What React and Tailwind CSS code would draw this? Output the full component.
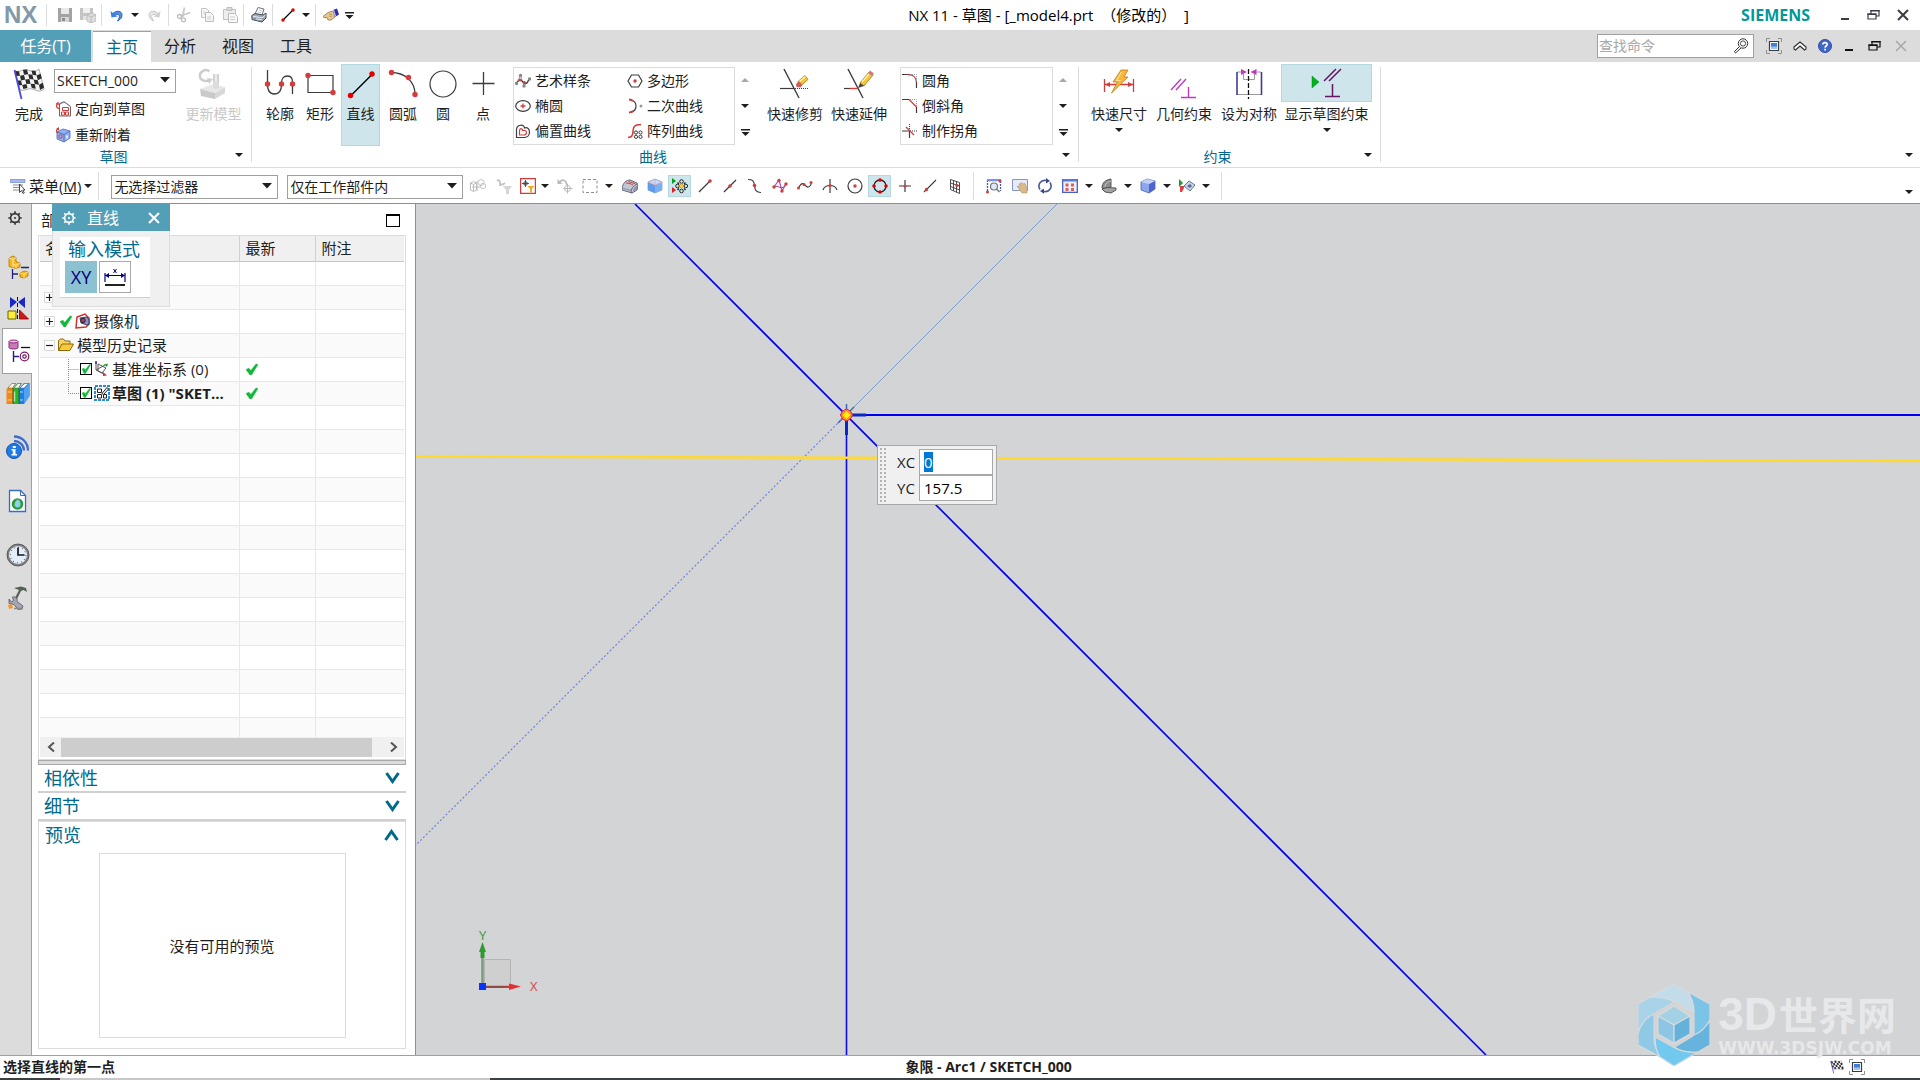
import { useEffect, useRef } from "react";

const INK = "#3c3c3c";
const RED = "#d23c3c";

function Svg({ w = 16, h = w, children, className = "", ...rest }) {
  return (
    <svg width={w} height={h} viewBox={`0 0 ${w} ${h}`} fill="none" aria-hidden="true" className={`shrink-0 ${className}`} {...rest}>
      {children}
    </svg>
  );
}

const Dot = ({ x, y, r = 2, c = RED }) => <circle cx={x} cy={y} r={r} fill={c} />;

function Caret({ color = "#1e1e1e", big = false }) {
  return big ? (
    <Svg w={10} h={6}><path d="M0 0h10L5 5.500z" fill={color} /></Svg>
  ) : (
    <Svg w={8} h={4}><path d="M0 0h8L4 4z" fill={color} /></Svg>
  );
}
const CaretUp = () => <Svg w={8} h={4}><path d="M0 4h8L4 0z" fill="#a8a8a8" /></Svg>;
const CaretBar = () => <Svg w={9} h={7}><path d="M0 0h9v1.500H0zM0.500 3h8L4.500 7z" fill="#1e1e1e" /></Svg>;

/* ---------- quick access icons ---------- */
const Save = () => (
  <Svg><path d="M1 1h14v14H1z" fill="#a3a3a3" /><path d="M4 1h8v6H4z" fill="#e9e9e9" /><path d="M4 10h8v5H4z" fill="#d6d6d6" /><path d="M5 11h3v3H5z" fill="#8d8d8d" /></Svg>
);
const SaveAs = () => (
  <Svg><path d="M0 1h13v12H0z" fill="#c4c4c4" /><path d="M3 1h7v5H3z" fill="#efefef" /><path d="M3 9h5v4H3z" fill="#e2e2e2" /><path d="M7 8l5-2 4 2v6l-5 2-4-2z" fill="#dedede" stroke="#bdbdbd" /><path d="M7 8l4 2 5-2M11 10v6" stroke="#bdbdbd" /></Svg>
);
const Undo = () => (
  <Svg w={14} h={14}><path d="M2.500 6C6 2 12 2.500 12 7c0 2.500-1.500 4.500-4.500 6 1.500-2.500 2.300-4 1.600-5.500-.8-1.700-3-1.500-4.500 0" fill="#4f8fe6" stroke="#2c62b8" strokeWidth="1" /><path d="M0.500 3l1 6.500 6-1z" fill="#3f7edb" /></Svg>
);
const Redo = () => (
  <Svg w={14} h={14}><path d="M11.500 6C8 2 2 2.500 2 7c0 2.500 1.500 4.500 4.500 6C5 10.500 4.200 9 4.900 7.500c.8-1.700 3-1.500 4.500 0" fill="#e6e6e6" stroke="#c6c6c6" /><path d="M13.500 3l-1 6.500-6-1z" fill="#d0d0d0" /></Svg>
);
const Cut = () => (
  <Svg><path d="M8.500 0.500L6.500 10M14.500 5.500L4.500 9" stroke="#c8c8c8" strokeWidth="1.800" /><circle cx="3.500" cy="9.500" r="2" stroke="#bdbdbd" strokeWidth="1.300" /><circle cx="7.500" cy="12.800" r="2" stroke="#bdbdbd" strokeWidth="1.300" /></Svg>
);
const Copy = () => (
  <Svg><path d="M2.500 1.500h5l2 2v7h-7z" fill="#f6f6f6" stroke="#c2c2c2" /><path d="M6.500 5.500h5l3 3v6h-8z" fill="#f6f6f6" stroke="#bcbcbc" /><path d="M8 10h4M8 12h4M4 5h2M4 7h2" stroke="#cfcfcf" /></Svg>
);
const Paste = () => (
  <Svg><path d="M1.500 2.500h12v10h-12z" fill="#ededed" stroke="#c2c2c2" /><path d="M5 0.500h5v3H5z" fill="#dadada" stroke="#bcbcbc" /><path d="M6.500 6.500h6l3 3v6h-9z" fill="#f8f8f8" stroke="#bcbcbc" /><path d="M8 10h5M8 12.500h5" stroke="#cfcfcf" /></Svg>
);
const Print = () => (
  <Svg><path d="M7 .5l6 1.500-2 6-7-1z" fill="#fff" stroke="#6c7480" /><path d="M8 3l3 .7M7 5l3 .7" stroke="#b9bec6" strokeWidth=".8" /><path d="M.8 8.500L4 6.500l8 1.500 3-2v5l-4 4-10-2.500z" fill="#a3a9b2" stroke="#454c56" /><path d="M3 12.500l7 1.500 2.500-2-7-1.200z" fill="#cfe3f7" stroke="#5f6a78" strokeWidth=".6" /><path d="M2 9.200l9 1.800 3.500-3" stroke="#eceff2" /></Svg>
);
const LineSmall = () => (
  <Svg w={14} h={14}><path d="M2 12L12 2" stroke="#000" strokeWidth="1.300" /><Dot x={2} y={12} r={1.700} c="#e00000" /><Dot x={12} y={2} r={1.700} c="#e00000" /></Svg>
);
const Hand = () => (
  <Svg h={14}><path d="M0 8.500l5-4 5-1.500 2 6-4 3H5L4 9.500l-3 .3z" fill="#e9c88f" stroke="#8f7244" strokeWidth=".8" /><path d="M6 6.500l3-.5M6.500 8.500l3-.5" stroke="#a9854c" strokeWidth=".8" /><path d="M10 2l4-1.500 2 6L12 9z" fill="#2b2bb4" /><path d="M10 2l1-.4L13 8l-1 1z" fill="#c8ccf0" /></Svg>
);

/* ---------- window icons ---------- */
const Minimize = ({ c = "#3c3c46" }) => <Svg w={12} h={12}><path d="M2 9h8v2H2z" fill={c} /></Svg>;
const Restore = ({ c = "#3c3c46" }) => (
  <Svg w={13} h={12}><path d="M1 5h8v5H1zM4 5V1.500h8V7H9" stroke={c} strokeWidth="1.200" /><path d="M0.400 4.500h9v1.600h-9zM3.400 1h9.200v1.600H3.400z" fill={c} /></Svg>
);
const Close = ({ c = "#3c3c46", w = 2 }) => <Svg w={12} h={12}><path d="M1 1l10 10M11 1L1 11" stroke={c} strokeWidth={w} /></Svg>;
const FullScreen = () => (
  <Svg><path d="M4 0.500H0.500V4M12 0.500h3.500V4M4 15.500H0.500V12M12 15.500h3.500V12" stroke="#8e8e8e" /><path d="M3.500 3.500h9v9h-9z" fill="#fff" stroke="#3c3c3c" strokeWidth="1.200" /><path d="M5 5h6v6H5z" fill="#3d7fd9" /><path d="M5 8.500h6V11H5z" fill="#9dc4f4" /></Svg>
);
const ChevronsUp = () => (
  <Svg w={14} h={12}><path d="M1 7l6-5 6 5v2l-1.500 1L7 6l-4.500 4L1 9z" fill="#fff" stroke="#2b2b2b" strokeWidth="1.100" /></Svg>
);
const Help = () => (
  <Svg w={14}><circle cx="7" cy="7" r="6.500" fill="#3f66c9" stroke="#2f4fa5" /><path d="M4.800 5.500C5 2.800 9.400 3 9.200 5.500 9 7 7.200 7 7.100 8.600" stroke="#fff" strokeWidth="1.700" /><path d="M6.200 9.800h1.800v1.600H6.200z" fill="#fff" /></Svg>
);
const Key = () => (
  <Svg><circle cx="10" cy="5.500" r="4.700" stroke="#333" /><circle cx="10" cy="5.500" r="2.600" stroke="#333" strokeWidth=".9" /><path d="M6.500 8.500L1.500 13.500l1 1.500L8 10" fill="#fff" stroke="#333" /></Svg>
);

/* ---------- large ribbon icons ---------- */
const Flag = ({ size = 32 }) => (
  <svg width={size} height={size} viewBox="0 0 32 32" fill="none" aria-hidden="true" className="shrink-0">
    <path d="M2 3c5 2 8-3 13-1s7 2 11-1l5 20c-4 4-8 1-12 0s-6 2-12 1z" fill="#f4f4f4" stroke="#777" strokeWidth=".6" />
    <g fill="#2c2c2c">
      <path d="M2 3l4 .3 1 4.500-4 .2zM10 2l4-.6 1.200 4.800-4.200.6zM18.500 2.500l4 .3 1 4.700-4-.7z" />
      <path d="M7 7.700l4-.8 1.200 4.700-4.200.9zM15.200 6.200l4.200.5 1.200 4.700-4.200-.3zM23.600 7.500l4-1.800 1.200 4.500-4 2z" />
      <path d="M4 12.600l4-.2 1.200 4.600-4 .4zM12.200 11.600l4.200-.5 1.200 4.700-4.200.3zM20.600 11.400l4.200.8 1.200 4.600-4.200-.7z" />
      <path d="M9.200 17l4.200-.9 1.100 4-4.100 1zM17.600 15.800l4.200.3 1 4.600-4-.6zM26 16.800l3.800-2 1.200 5-4 2.200z" />
    </g>
    <path d="M1.500 2l7 29" stroke="#4a4ad6" strokeWidth="1.800" />
  </svg>
);
const UpdateModel = () => (
  <Svg w={32}><path d="M11.500 3.500C7 0 1 4 2 9c1 4 7 5 10 3" stroke="#cdcdcd" strokeWidth="2.500" /><path d="M9 10l6 1-4 5z" fill="#cdcdcd" /><path d="M15 6h6v14h-6z" fill="#d2d2d2" /><path d="M17 6h2v14h-2z" fill="#ececec" /><path d="M2 21l13-5 12 3-10 6z" fill="#e8e8e8" /><path d="M2 21l15 4v6L3 28z" fill="#cacaca" /><path d="M17 25l10-6v6l-10 6z" fill="#d8d8d8" /><path d="M15 14h6v6l-3 1-3-1z" fill="#dcdcdc" /></Svg>
);
const Profile = () => (
  <Svg w={32}><path d="M3.500 2v14c0 5 1 10 7 10s7-5 7-10 1-8 6-8 5 4 5 8v10" stroke={INK} strokeWidth="1.300" /><Dot x={3.500} y={16} r={2.700} /><Dot x={17.500} y={16} r={2.700} /><Dot x={28.500} y={16} r={2.700} /></Svg>
);
const Rectangle = () => (
  <Svg w={32}><path d="M4 7.500h25v17H4z" stroke={INK} strokeWidth="1.200" /><Dot x={4} y={7.500} r={2.700} /><Dot x={29} y={24.500} r={2.700} /></Svg>
);
const Line = () => (
  <Svg w={32}><path d="M6 27.500L27 6.500" stroke="#000" strokeWidth="1.500" /><Dot x={5.500} y={27.500} r={2.700} c="#e60000" /><Dot x={27} y={6} r={2.700} c="#e60000" /></Svg>
);
const Arc = () => (
  <Svg w={32}><path d="M4 4.500c14 0 24 9 24 22" stroke={INK} strokeWidth="1.300" /><Dot x={4.500} y={4.500} r={2.700} /><Dot x={21.500} y={9.500} r={2.700} /><Dot x={28} y={26.500} r={2.700} /></Svg>
);
const Circle = () => <Svg w={32}><circle cx="16" cy="16" r="13" stroke={INK} strokeWidth="1.200" /></Svg>;
const Point = () => <Svg w={32}><path d="M16.500 4v23M5.500 15.500h22" stroke={INK} strokeWidth="1.300" /></Svg>;
const Trim = () => (
  <Svg w={32}><path d="M5 1l15 29" stroke={INK} strokeWidth="1.400" /><path d="M1 20.500h14" stroke={INK} strokeWidth="1.200" /><path d="M16 20.500h14" stroke={INK} strokeDasharray="1 1" /><path d="M19 13.500l7-6 3 4-7 6z" fill="#f2c53a" stroke="#a07818" strokeWidth=".8" /><path d="M17 16l3-3 3.500 4-2 2.500-4-.5z" fill="#c9605a" /><path d="M20.500 13.500l6-5" stroke="#fff3a8" strokeWidth="1.500" /></Svg>
);
const Extend = () => (
  <Svg w={32}><path d="M5 1l15 29" stroke={INK} strokeWidth="1.400" /><path d="M1 20.500h6" stroke={INK} strokeWidth="1.200" /><path d="M7 20.500h8" stroke={RED} strokeWidth="1.400" /><path d="M17 15L26 4l4 3-9 11z" fill="#f2c53a" stroke="#a07818" strokeWidth=".8" /><path d="M15 20l2-5 4 3z" fill="#444" /><path d="M25 5l2-2.500 4 3L29 8z" fill="#d27b72" /><path d="M19 14l7-8" stroke="#fff3a8" strokeWidth="1.300" /></Svg>
);
const RapidDim = () => (
  <Svg w={32}><path d="M1.500 11v13M30.500 11v13M2 16.500h28" stroke={RED} strokeWidth="1.300" /><path d="M2 16.500l5-2.500v5zM30 16.500l-5-2.500v5z" fill={RED} /><path d="M18 2h7l-4 7h4L8.500 25l6-11h-4.500z" fill="#f6b73a" stroke="#c4781a" strokeWidth=".8" /><path d="M18.500 4l-5 8.500h4" stroke="#ffe9a0" /></Svg>
);
const GeoConstraint = () => (
  <Svg w={32}><path d="M3 22l10-11M8 22l10-11M20.500 19v11M13 29.500h15" stroke="#c03ac0" strokeWidth="1.400" /></Svg>
);
const Symmetric = () => (
  <Svg w={32}><path d="M4 4h5M23 4h5M4 26.500h24M10.500 6v5.500h11V6" stroke="#9a9a9a" /><path d="M4 4v23M28.500 4v23" stroke="#3c3c96" strokeWidth="1.600" /><path d="M15.500 1v30" stroke="#111" strokeWidth="1.300" strokeDasharray="5 2" /><path d="M8 1l6 3-6 3zM23.500 1l-6 3 6 3z" fill="#c03ac0" /></Svg>
);
const ShowConstraints = () => (
  <Svg w={32}><path d="M1 9l7 6-7 6z" fill="#00b41e" stroke="#008a14" strokeWidth=".5" /><path d="M13 14L25 2M18 14L30 2M21.500 17v12M14 29.500h15" stroke="#6a1464" strokeWidth="1.500" /></Svg>
);

/* ---------- small ribbon icons ---------- */
const Orient = () => (
  <Svg><path d="M4.500 2.500L9 .8l6.500 4.700v9.500h-11z" fill="#fff" stroke="#666" /><path d="M5 3l4.500-2 5.500 4" stroke="#7d7dd0" /><path d="M7.500 6.500h6v3h-6zM6.500 11h3v3h-3zM10.500 11h3v3h-3z" stroke={RED} /><path d="M4 7.500C1 7 1 4 2.500 3" stroke={RED} strokeWidth="1.300" /><path d="M0.500 3l3-2.500.5 3.500z" fill={RED} /></Svg>
);
const Reattach = () => (
  <Svg><path d="M2 5l6-3 7 2v7l-6 4-7-3z" fill="#8fb2f0" stroke="#4a62b8" strokeWidth=".8" /><path d="M2 5l7 2.500L15 4M9 7.500V15" stroke="#4a62b8" strokeWidth=".8" /><path d="M4 8h3v3H4z" stroke="#d24a6a" /><path d="M11 8.500h2v3h-2z" fill="#dfe8fc" /><path d="M3 6C1 5 1 3 3 2" stroke={RED} strokeWidth="1.300" /><path d="M1 2l3-2v3.500z" fill={RED} /></Svg>
);
const Spline = () => (
  <Svg><path d="M1.500 10L5.500 2.500 9 13l5.500-7" stroke="#9a9a9a" /><path d="M1 11c4-6 5-4 7-2s4 3 6-3" stroke={INK} strokeWidth="1.200" /><Dot x={1.500} y={10.500} c="#888" r={1.700} /><Dot x={5.500} y={2.500} c="#888" r={1.700} /><Dot x={9} y={13} c="#888" r={1.700} /><Dot x={14.500} y={6} c="#888" r={1.700} /><Dot x={5} y={7} r={1.500} /><Dot x={9.500} y={9.500} r={1.500} /></Svg>
);
const Ellipse = () => <Svg><ellipse cx="8" cy="8" rx="7.300" ry="5.300" stroke={INK} strokeWidth="1.200" /><path d="M8 5.500v5M5.500 8h5" stroke={RED} strokeWidth="1.300" /></Svg>;
const OffsetCurve = () => <Svg><path d="M1.500 14.500V7c0-6 8-6 8-2 3-1 5 1 5 4 0 3-2 5.500-5 5.500z" stroke={INK} strokeWidth="1.200" /><path d="M4.500 12V8c0-3 3-3 3-.5 2-.5 4 0 4 2S10 12 8.500 12z" stroke={RED} strokeWidth="1.200" /></Svg>;
const Polygon = () => <Svg><path d="M4.500 2h7l3.500 6-3.500 6h-7L1 8z" stroke={INK} strokeWidth="1.200" /><Dot x={8} y={8} r={1.700} /></Svg>;
const Conic = () => <Svg><path d="M3 2c8 1 8 11 0 12.500" stroke={INK} strokeWidth="1.200" /><path d="M2 1.500c2 0 3 .5 4 1.500M2 14.500c2 0 3-.5 4-1.500" stroke={RED} strokeWidth="2" /><Dot x={14} y={8} c="#9a9a9a" r={1.500} /></Svg>;
const PatternCurve = () => (
  <Svg><path d="M1 14.500c4 0 5-2 5-6s1-7 8-7" stroke={RED} strokeWidth="1.600" /><circle cx="9" cy="9.500" r="1.600" stroke={INK} /><circle cx="13.500" cy="9.500" r="1.600" stroke={INK} /><circle cx="9" cy="13.800" r="1.600" stroke={INK} /><circle cx="13.500" cy="13.800" r="1.600" stroke={INK} /></Svg>
);
const Fillet = () => <Svg><path d="M0 1.500h6M14.500 9v6" stroke={INK} strokeWidth="1.200" /><path d="M6 1.500c5 0 8.500 3 8.500 8" stroke={RED} strokeWidth="1.300" /><path d="M8 1.500h6.500V8" stroke="#999" strokeDasharray="1 1" /></Svg>;
const Chamfer = () => <Svg><path d="M0 1.500h7M14.500 9v6" stroke={INK} strokeWidth="1.200" /><path d="M7 1.500l7.500 7.500" stroke={RED} strokeWidth="1.300" /><path d="M8 1.500h6.500V8" stroke="#999" strokeDasharray="1 1" /></Svg>;
const Corner = () => <Svg><path d="M0 8h8M7.500 8v7" stroke={INK} strokeWidth="1.200" /><path d="M7.500 1v7M8 8h7" stroke={INK} strokeDasharray="1 1" /><path d="M4 4l8 8" stroke={RED} strokeWidth="1.300" /></Svg>;

/* ---------- selection bar icons ---------- */
const MenuIcon = () => (
  <Svg><path d="M0 1.500h15v3H0z" fill="#a5b8ee" stroke="#6f85cf" strokeWidth=".7" /><path d="M3 7h10M3 9.500h7M3 12h8" stroke="#8b8b8b" strokeWidth="1.200" /><path d="M9.500 6v8.500l2-2 1.500 3 1.300-.7-1.500-2.800H15z" fill="#fff" stroke="#333" strokeWidth=".9" /></Svg>
);
const AsmGrey = () => <Svg><path d="M0.500 5l3-1.500L6.500 5v7l-3 1.500-3-1.500zM0.500 5l3 1.500 3-1.500M3.500 6.500v7M2 9h8M7 3v10" stroke="#bdbdbd" /><circle cx="11" cy="4.500" r="3" stroke="#c6c6c6" /><circle cx="13" cy="8" r="2.700" stroke="#c6c6c6" /></Svg>;
const FilterGrey = () => <Svg><path d="M1 3c2-2 3 0 3 2s3 2 5 0M4 5v3" stroke="#c4c4c4" strokeWidth="1.800" /><path d="M7 8h9l-3 4v4h-3v-4z" fill="#d6d6d6" /></Svg>;
const SelScope = () => <Svg><path d="M.6.6h14.800v14.800H.6z" fill="#fff" stroke={RED} strokeWidth="1.200" /><circle cx="5.500" cy="5.500" r="1.800" stroke="#444" /><path d="M5.500 2v7M2 5.500h7" stroke="#444" strokeWidth=".9" /><path d="M7.500 8h7L12 11v3.500h-2V11z" fill="#eab12e" /></Svg>;
const SnapGrey = () => <Svg><path d="M2 5c3-5 7-3 8 2" stroke="#bababa" strokeWidth="1.600" /><path d="M.5 1v5h5z" fill="#bababa" /><circle cx="10.500" cy="10.500" r="3" stroke="#bababa" /><path d="M10.500 6v9.500M6 10.500h9.500" stroke="#bababa" /></Svg>;
const Marquee = () => <Svg><path d="M1 1.500h14v13H1z" stroke="#8c8c8c" strokeWidth="1" strokeDasharray="3 2" /></Svg>;
const FaceCube = () => <Svg><path d="M0 10c1-5 4-8 8-8l7 3c1 1 1 5 0 7l-5 3-10-3z" fill="#c3c6d4" stroke="#55586a" strokeWidth=".9" /><path d="M9 15c0-4 2-7 6-9" stroke="#55586a" strokeWidth=".9" /><path d="M0 10l9 2.500" stroke="#7b7e90" strokeWidth=".8" /><path d="M4 5c3 0 5 1 7 2M6.500 3.500l6.500 2.200" stroke={RED} /><path d="M11 14c0-3 1.500-5 4-6.500v4.500z" fill="#8f93a8" /></Svg>;
const BlueCube = () => <Svg><path d="M1 4l7-3 7 3v8l-7 3-7-3z" fill="#c5dcf8" stroke="#6f93c4" strokeWidth=".7" /><path d="M1 4l7 3v8l-7-3z" fill="#5f9be8" /><path d="M8 7l7-3v8l-7 3z" fill="#7db0f0" /><path d="M1 4l7 3 7-3M8 7V1" stroke="#e8a5b5" strokeWidth=".8" /></Svg>;
const SnapAll = () => (
  <Svg><path d="M0 0l4 3-4 3z" fill="#00a01e" /><path d="M0 9l4 3-4 3z" fill="#e02020" /><circle cx="9.500" cy="3.500" r="1.800" stroke="#222" /><circle cx="9.500" cy="13" r="1.800" stroke="#222" /><circle cx="5.500" cy="8" r="1.800" stroke="#222" /><circle cx="13.800" cy="8" r="1.800" stroke="#222" /><path d="M9.500 5.500L12 8l-2.500 2.500L7 8z" fill="#ffd21e" stroke="#a08010" strokeWidth=".6" /><path d="M5.500 4.500l1.500 1.500M13.500 4.500L12 6M5.500 12l1.500-1.500M13.500 12L12 10.500" stroke="#222" strokeWidth="1.300" /></Svg>
);
const EndPoint = () => <Svg><path d="M2 14L13 3" stroke={INK} strokeWidth="1.200" /><Dot x={13} y={3} r={1.800} /></Svg>;
const MidPoint = () => <Svg><path d="M2 14L14 2" stroke={INK} strokeWidth="1.200" /><Dot x={8} y={8} r={1.800} /></Svg>;
const CtrlPoint = () => <Svg><path d="M1 1.500c5 0 6 1.500 6.500 6S9 14.500 14 14.500" stroke={INK} strokeWidth="1.200" /><Dot x={7.500} y={7.500} r={1.800} /></Svg>;
const Poles = () => <Svg><path d="M2 9L7 2l3 11 4-7" stroke="#b048c8" strokeWidth="1.200" /><path d="M2 9c4-3 8 5 12-3" stroke="#8a4a6a" /><Dot x={2} y={9} r={1.700} /><Dot x={7} y={2.500} r={1.700} /><Dot x={10} y={13} r={1.700} /><Dot x={14} y={6} r={1.700} /></Svg>;
const Knots = () => <Svg><path d="M1.500 10c4-8 6-3 8-1.500S14 8 14.500 4.500" stroke={INK} strokeWidth="1.200" /><Dot x={1.500} y={10} r={1.500} /><Dot x={7} y={6.500} r={1.500} /><Dot x={14} y={4.500} r={1.500} /></Svg>;
const Intersect = () => <Svg><path d="M8 1v14" stroke={INK} strokeWidth="1.200" /><path d="M1 12c2-6 12-6 14 0" stroke={INK} strokeWidth="1.200" /><Dot x={8} y={7.500} r={1.600} /></Svg>;
const ArcCenter = () => <Svg><circle cx="8" cy="8" r="7" stroke={INK} strokeWidth="1.200" /><Dot x={8} y={8} r={1.700} /></Svg>;
const Quadrant = () => <Svg><circle cx="8" cy="8" r="6" stroke="#222" strokeWidth="1.300" /><Dot x={8} y={2} r={1.800} c="#e00000" /><Dot x={8} y={14} r={1.800} c="#e00000" /><Dot x={2} y={8} r={1.800} c="#e00000" /><Dot x={14} y={8} r={1.800} c="#e00000" /></Svg>;
const Existing = () => <Svg><path d="M8 2v12M2 8h12" stroke={INK} strokeWidth="1.200" /><Dot x={8} y={8} r={1.500} /></Svg>;
const OnCurve = () => <Svg><path d="M2 14L14 2" stroke={INK} strokeWidth="1.100" /><Dot x={4.500} y={11.500} r={1.700} /></Svg>;
const OnFace = () => <Svg><path d="M3.500 1.500l9 3v11l-9-4zM6.500 2.500v10.300M9.500 3.500v10.700M3.500 5l9 3M3.500 8.500l9 3.500" stroke="#3a3a3a" strokeWidth=".9" /><Dot x={10} y={7.500} r={1.600} /></Svg>;
const FitWindow = () => <Svg><path d="M1.500 13V2.500h13V13" stroke="#3d55c9" strokeWidth="1.300" strokeDasharray="2 1" /><path d="M1 1h14v2H1z" fill="#7d90e8" /><circle cx="8" cy="8.500" r="3.500" fill="#dfe8f6" stroke="#777" strokeWidth="1.200" /><path d="M10.500 11l3 3" stroke="#777" strokeWidth="1.500" /><Dot x={1.500} y={14} r={1.500} /><Dot x={14} y={3} r={1.500} /></Svg>;
const PanHand = () => <Svg><path d="M.5 1.500h15v11H.5z" fill="#e6ebfb" stroke="#8494cc" /><path d="M5 8l2 1 .5-3.500L9 6l1-1.500L11.500 6l1.500-.5 1.500 3.500.5 6H10z" fill="#d9b98a" stroke="#b3935f" strokeWidth=".6" /></Svg>;
const Rotate = () => <Svg><path d="M3 11.500C0 6.500 4 1.500 9 2.500M13 4.500c3 5-1 10-6 9" stroke="#4a5a96" strokeWidth="1.600" /><path d="M9 0l4 3-4 2.500zM7 10.500L3 13l4 2.800z" fill="#3b4a86" /></Svg>;
const Layout = () => <Svg><path d="M.7 1.700h14.600v12.600H.7z" fill="#eef2ff" stroke="#4460cc" strokeWidth="1.300" /><path d="M1 1h14v2.500H1z" fill="#5a76e0" /><path d="M3.500 5.500h3v3h-3zM9 5.500h3v3H9zM3.500 10h3v3h-3zM9 10h3v3H9z" fill="#e25a4a" /></Svg>;
const DarkShape = () => <Svg><path d="M1 10C1 5 4 2 10 1v8L5 12z" fill="#8c8c8c" stroke="#4a4a4a" strokeWidth=".9" /><path d="M4 9c0-3 2-5 6-6" stroke="#c9c9c9" /><path d="M1 11l5-1.500 9 .5v2l-5 3-6-1z" fill="#a3a3a3" stroke="#4a4a4a" strokeWidth=".9" /></Svg>;
const ShadedCube = () => <Svg><path d="M1 4l6-3 8 2v8l-6 4-8-3z" fill="#8fa6ee" stroke="#4a5fb8" strokeWidth=".8" /><path d="M9 6l6-3v8l-6 4z" fill="#4e66c9" /><path d="M1 4l6-3 8 2-6 3z" fill="#c3d0fa" /></Svg>;
const ShowHide = () => <Svg><path d="M0 1l4 4-4 4z" fill="#16a030" /><path d="M1 8h4v2l-2 4H1z" fill="#e04040" /><path d="M5 8l5-5 6 4-5 6z" fill="#c7d4ee" stroke="#5a6a8a" strokeWidth=".9" /><path d="M8 8l3-2 2 2-2 2z" fill="#5a6a8a" /></Svg>;

/* ---------- resource bar icons ---------- */
const Gear = ({ c = "#333", size = 14 }) => (
  <svg width={size} height={size} viewBox="0 0 14 14" fill="none" aria-hidden="true" className="shrink-0">
    <circle cx="7" cy="7" r="4.400" stroke={c} strokeWidth="1.600" />
    <circle cx="7" cy="7" r="1" fill={c} />
    <path d="M7 .3v2M7 11.700v2M.3 7h2M11.700 7h2M2.300 2.300l1.300 1.300M10.400 10.400l1.300 1.300M2.300 11.700l1.300-1.300M10.400 3.600l1.300-1.300" stroke={c} strokeWidth="1.600" />
  </svg>
);
const Assembly = () => (
  <Svg w={24}><path d="M2 3l4-2 3 1.500v4l4 1.500v4l-4 1.500-7-2z" fill="#f9b51c" stroke="#b57700" strokeWidth=".8" /><path d="M2 3l4 1.500 3-2M6 4.500v8M6 9l3 1.500 4-2.500M9 10.500v3" stroke="#fff0b0" strokeWidth=".9" /><path d="M14 12.500h8M5.500 14v10M6 19h5" stroke="#22227a" strokeWidth="1.300" /><path d="M13 18l4-2 4 1v4l-4 2-4-1z" fill="#f9b51c" stroke="#b57700" strokeWidth=".8" /><path d="M13 18l4 1 4-2M17 19v4" stroke="#fff0b0" strokeWidth=".8" /></Svg>
);
const Constraint = () => (
  <Svg w={24}><path d="M3 1l7 5-7 6zM18 1l-7 5 7 6z" fill="#1a28c8" /><path d="M10.500 1v22" stroke="#111" strokeDasharray="4 2" /><path d="M1 15h8v8H1z" fill="#ffee3a" stroke="#6a6000" /><path d="M12.500 14v9h9z" fill="#d81414" stroke="#7a0808" strokeWidth=".8" /></Svg>
);
const PartNav = () => (
  <Svg w={24}><path d="M1 2.500v6c0 2 9 2 9 0v-6" fill="#c77bb8" stroke="#8a2a78" /><ellipse cx="5.500" cy="2.500" rx="4.500" ry="1.500" fill="#ebc1e2" stroke="#8a2a78" /><path d="M13 8.500h9" stroke="#111" strokeWidth="1.300" /><path d="M5.500 12v11M6 17.500h5" stroke="#22227a" strokeWidth="1.400" /><circle cx="16.500" cy="17.500" r="4.300" stroke="#7a1a68" strokeWidth="1.200" /><circle cx="16.500" cy="17.500" r="1.700" stroke="#7a1a68" strokeWidth="1.200" /></Svg>
);
const Books = () => (
  <Svg w={24}><path d="M.5 7L6 1h4.500L7 6.500V22H.5z" fill="#ef8a12" /><path d="M7 6.500L11.500 1H16l-3 5.500V22H7z" fill="#25b82c" /><path d="M13 6.500L18 1h5.500v13L18 22h-5z" fill="#1f7fe0" /><path d="M18 7l5.500-6v13L18 22z" fill="#4fa2f0" /><path d="M2 6l4-4.500h3.500L6.500 6zM8 6l4-4.500h3L12.500 6zM14 6l4.500-4.500h4L18 6z" fill="#fff" stroke="#556" strokeWidth=".5" /><path d="M1.500 10H6M1.500 18H6" stroke="#ffd08a" /><path d="M8.500 9.500v10" stroke="#a5f0a8" strokeWidth="1.500" /><path d="M14 10h3M14 18h3" stroke="#a8d4ff" /><path d="M7 6v16M13 6v16" stroke="#334" strokeWidth=".7" /></Svg>
);
const InfoFeed = () => (
  <Svg w={24}><path d="M8 1.500c8 0 14 6 14 14M8 6c5 0 10 4 10 9.500" stroke="#3c6cc8" strokeWidth="2.300" /><circle cx="8" cy="16" r="7.500" fill="#1d7bea" stroke="#1a4fa8" /><path d="M6.800 11h3v2h-3zM5.500 14h4v5h1.500v1.500H5.500V19h1.300v-3.500H5.500z" fill="#fff" /></Svg>
);
const WebPage = () => (
  <Svg w={20} h={24}><path d="M1.500 1.500h11l5 5v16h-16z" fill="#fff" stroke="#3a6cc0" strokeWidth="1.300" /><path d="M12.500 1.500v5h5" stroke="#3a6cc0" /><circle cx="9.500" cy="15" r="5.800" fill="#2e9a36" /><path d="M9.500 10.500c3 1 4 5 2 7.500-2 1-5 0-5-2s1-4 3-5.500z" fill="#8fd0ee" /></Svg>
);
const Clock = () => (
  <Svg w={24}><circle cx="12" cy="12" r="10" fill="#e3edf8" stroke="#7f7f84" strokeWidth="2" /><circle cx="12" cy="12" r="11" stroke="#4c4c50" strokeWidth=".8" /><circle cx="12" cy="12" r="7.800" stroke="#333" strokeWidth="1" strokeDasharray="1 3.080" /><path d="M12 4.500V12h6.500" stroke="#14141e" strokeWidth="1.700" /></Svg>
);
const Tools = () => (
  <Svg w={24}><path d="M8 2l7-1.500 5 1.500 1 4-3.500-2L15 5l-4 8-2-1 4-8z" fill="#566056" /><path d="M3 13l2.500 3 2-1.500L6.500 11c3-1 5.500 2 4.500 4.500l6 4.500-1 3-4 .5-4-5-5-1z" fill="#a5a5b4" stroke="#55555f" strokeWidth=".8" /><path d="M2 19l4-1 1 4-4 1z" fill="#f79a1e" /><path d="M8 22.500h9" stroke="#8a8a8a" strokeWidth="1.500" /></Svg>
);

/* ---------- tree icons ---------- */
const Tick = () => <Svg w={12} h={12}><path d="M0 6.500l3-1.300 1.800 2.300L10 1l2 .5L5.500 12H4z" fill="#12b83a" stroke="#12b83a" strokeWidth=".5" /></Svg>;
const Camera = () => (
  <Svg><path d="M2 4l8-3 4 4v6l-3 3-10 1z" fill="#fff" stroke="#d03030" strokeWidth="1.500" /><path d="M5 5l7-1 2 3v4l-2 1-6-2z" fill="#7f98d4" stroke="#223" strokeWidth=".8" /><circle cx="8" cy="7.500" r="2.300" fill="#b43a4a" stroke="#223" /></Svg>
);
const Folder = () => (
  <Svg h={14}><path d="M.5 12.500v-10l2-1.500h3l1.500 2h5v3" fill="#f7d464" stroke="#8a6a10" /><path d="M.5 12.500L4 6h11.500l-3.500 6.500z" fill="#fbc93a" stroke="#8a6a10" /></Svg>
);
const Datum = () => (
  <Svg><path d="M2 1v8l8 4M2 9l9-5M4 3l8 4-4 5-4-2z" stroke="#555" /><path d="M2 0v3" stroke="#2a2ad0" strokeWidth="1.500" /><path d="M10 3.500l4-1-1 3.500z" fill="#18a030" /><path d="M9 11l4 3.500-4 .5z" fill="#d03030" /></Svg>
);
const SketchIcon = () => (
  <Svg><path d="M1 1h14v14H1z" fill="#fff" stroke="#2a8ad8" strokeWidth="2" strokeDasharray="3 1" /><path d="M3.500 4h4v3.500h-4zM3.500 9.500h4v3.500h-4zM9.500 9.500h3v3.500h-3z" fill="#fff" stroke="#222" /><path d="M8 8.500l5-6 1.500 1.500-5 5.500z" fill="#fff" stroke="#222" /></Svg>
);

/* ---------- building blocks ---------- */
function IconButton({ label, className = "w-[25px]", children }) {
  return (
    <button type="button" aria-label={label} title={label} className={`flex shrink-0 items-center justify-center ${className}`}>
      {children}
    </button>
  );
}
const QuickDivider = () => <span className="ml-0.5 mr-[3px] h-[22px] w-px shrink-0 bg-[#dcdcdc]" />;
const BarDivider = ({ className = "" }) => <span className={`h-7 w-px shrink-0 bg-[#dcdcdc] ${className}`} />;
const GroupDivider = () => <span className="my-[5px] w-px shrink-0 bg-[#dcdcdc]" />;

function BigButton({ label, icon, className, disabled, active, arrow, iconActive }) {
  return (
    <button
      type="button"
      disabled={disabled}
      aria-pressed={active || iconActive || undefined}
      className={`mt-0.5 flex h-[82px] shrink-0 flex-col items-center border text-sm leading-5 whitespace-nowrap ${active ? "border-[#b4d8e0] bg-[#cde5eb]" : "border-transparent"} ${disabled ? "text-[#c8c8c8]" : ""} ${className}`}
    >
      <span className={`flex h-[38px] items-center justify-center ${iconActive ? "-mx-px -mt-px w-[91px] border border-[#b4d8e0] bg-[#cde5eb]" : ""}`}>{icon}</span>
      <span className={iconActive ? "mt-0.5" : "mt-px"}>{label}</span>
      {arrow && <span className="mt-1"><Caret /></span>}
    </button>
  );
}

function SmallButton({ label, icon }) {
  return (
    <button type="button" className="flex items-center gap-1 pl-px text-sm leading-5 whitespace-nowrap">
      {icon}
      {label}
    </button>
  );
}

function Group({ title, children, className = "" }) {
  return (
    <section aria-label={title} className="flex shrink-0 flex-col">
      <div className={`flex h-[85px] ${className}`}>{children}</div>
      <div className="flex h-5 items-center">
        <span className="flex-1 text-center text-sm leading-5 text-[#00698c]">{title}</span>
        <IconButton label={`${title} 选项`} className="w-6 pb-1"><Caret /></IconButton>
      </div>
    </section>
  );
}

function GalleryScroll() {
  return (
    <div className="mt-[5px] grid h-[78px] w-5 grid-rows-3">
      <IconButton label="向上" className="w-5"><CaretUp /></IconButton>
      <IconButton label="向下" className="w-5"><Caret /></IconButton>
      <IconButton label="更多" className="w-5"><CaretBar /></IconButton>
    </div>
  );
}

function Combo({ label, value, className = "" }) {
  return (
    <div className={`relative h-6 shrink-0 ${className}`}>
      <select aria-label={label} defaultValue={value} className="h-full w-full appearance-none border border-[#a0a0a0] bg-white pl-0.5 text-sm leading-5 text-[#1e1e1e] outline-none">
        <option>{value}</option>
      </select>
      <span className="pointer-events-none absolute inset-y-0 right-1.5 flex items-center"><Caret big /></span>
    </div>
  );
}

/* ---------- page sections ---------- */
function TitleBar() {
  return (
    <header className="flex h-[30px] shrink-0 items-center bg-white">
      <div className="flex w-[47.3%] items-center self-stretch">
        <span className="w-[46px] shrink-0 pl-1 font-['Liberation_Sans',sans-serif] text-2xl leading-7 font-bold text-[#8399aa]">NX</span>
        <span className="mr-1.5 h-[22px] w-px shrink-0 bg-[#dcdcdc]" />
        <IconButton label="保存" className="w-[23px]"><Save /></IconButton>
        <IconButton label="全部保存" className="w-[23px]"><SaveAs /></IconButton>
        <QuickDivider />
        <IconButton label="撤消" className="w-[23px]"><Undo /></IconButton>
        <IconButton label="撤消列表" className="w-3.5"><Caret /></IconButton>
        <IconButton label="重做" className="w-6"><Redo /></IconButton>
        <QuickDivider />
        <IconButton label="剪切" className="w-[23px]"><Cut /></IconButton>
        <IconButton label="复制" className="w-[23px]"><Copy /></IconButton>
        <IconButton label="粘贴" className="w-[23px]"><Paste /></IconButton>
        <QuickDivider />
        <IconButton label="打印" className="w-[23px]"><Print /></IconButton>
        <QuickDivider />
        <IconButton label="直线" className="w-[23px]"><LineSmall /></IconButton>
        <IconButton label="直线列表" className="w-3.5"><Caret /></IconButton>
        <QuickDivider />
        <IconButton label="触控模式" className="w-[23px]"><Hand /></IconButton>
        <IconButton label="自定义" className="w-3.5"><CaretBar /></IconButton>
      </div>
      <h1 className="text-[15px] leading-6 whitespace-pre text-black">NX 11 - 草图 - [_model4.prt  （修改的）  ]</h1>
      <div className="flex flex-1 items-center justify-end">
        <span className="mr-5 text-base leading-5 font-bold text-[#009999]">SIEMENS</span>
        <IconButton label="最小化" className="w-[29px]"><Minimize /></IconButton>
        <IconButton label="还原" className="w-[29px]"><Restore /></IconButton>
        <IconButton label="关闭" className="mr-[3px] w-[29px]"><Close /></IconButton>
      </div>
    </header>
  );
}

function TabBar() {
  return (
    <nav className="flex h-8 shrink-0 bg-[#dcdcdc] text-base leading-6">
      <button type="button" className="mr-0.5 w-[91px] bg-[#539fb7] text-white">任务(T)</button>
      <button type="button" aria-current="page" className="mt-px w-[58px] border-t border-[#a0a0a0] bg-white text-[#00698c]">主页</button>
      <button type="button" className="w-[58px]">分析</button>
      <button type="button" className="w-[58px]">视图</button>
      <button type="button" className="w-[58px]">工具</button>
      <div className="flex flex-1 items-center justify-end">
        <div className="mr-[7px] flex h-6 w-[157px] items-center border border-[#a0a0a0] bg-white pr-1">
          <input aria-label="查找命令" placeholder="查找命令" className="min-w-0 flex-1 pl-px text-sm leading-5 outline-none placeholder:text-[#a8a8a8]" />
          <Key />
        </div>
        <IconButton label="全屏" className="w-[26px]"><FullScreen /></IconButton>
        <IconButton label="最小化功能区" className="w-[26px]"><ChevronsUp /></IconButton>
        <IconButton label="帮助" className="w-6"><Help /></IconButton>
        <IconButton label="最小化窗口" className="w-6"><Minimize c="#111" /></IconButton>
        <IconButton label="还原窗口" className="w-[27px]"><Restore c="#111" /></IconButton>
        <IconButton label="关闭窗口" className="mr-1.5 w-[26px]"><Close c="#a8a8a8" w={1.500} /></IconButton>
      </div>
    </nav>
  );
}

function Ribbon() {
  return (
    <div className="flex shrink-0 border-b border-[#dcdcdc] bg-white">
      <Group title="草图" className="pl-2">
        <BigButton label="完成" icon={<Flag />} className="w-[42px]" />
        <div className="ml-1 flex w-[122px] flex-col pt-1.5">
          <Combo label="草图名" value="SKETCH_000" />
          <div className="mt-1 grid grid-rows-[26px_25px]">
            <SmallButton label="定向到草图" icon={<Orient />} />
            <SmallButton label="重新附着" icon={<Reattach />} />
          </div>
        </div>
        <BigButton label="更新模型" icon={<UpdateModel />} disabled className="w-[75px]" />
      </Group>
      <GroupDivider />
      <Group title="曲线" className="pr-[5px] pl-2">
        <BigButton label="轮廓" icon={<Profile />} className="w-10" />
        <BigButton label="矩形" icon={<Rectangle />} className="w-10" />
        <BigButton label="直线" icon={<Line />} active className="ml-px w-[39px]" />
        <BigButton label="圆弧" icon={<Arc />} className="w-[46px]" />
        <BigButton label="圆" icon={<Circle />} className="w-[34px]" />
        <BigButton label="点" icon={<Point />} className="w-[46px]" />
        <div className="mt-[5px] ml-[7px] grid h-[78px] w-[222px] grid-cols-[112px_1fr] grid-rows-3 border border-[#dcdcdc]">
          <SmallButton label="艺术样条" icon={<Spline />} />
          <SmallButton label="多边形" icon={<Polygon />} />
          <SmallButton label="椭圆" icon={<Ellipse />} />
          <SmallButton label="二次曲线" icon={<Conic />} />
          <SmallButton label="偏置曲线" icon={<OffsetCurve />} />
          <SmallButton label="阵列曲线" icon={<PatternCurve />} />
        </div>
        <GalleryScroll />
        <BigButton label="快速修剪" icon={<Trim />} className="ml-2 w-16" />
        <BigButton label="快速延伸" icon={<Extend />} className="w-16" />
        <div className="mt-[5px] ml-[9px] grid h-[78px] w-[153px] grid-rows-3 border border-[#dcdcdc]">
          <SmallButton label="圆角" icon={<Fillet />} />
          <SmallButton label="倒斜角" icon={<Chamfer />} />
          <SmallButton label="制作拐角" icon={<Corner />} />
        </div>
        <GalleryScroll />
      </Group>
      <GroupDivider />
      <Group title="约束" className="pr-2 pl-2">
        <BigButton label="快速尺寸" icon={<RapidDim />} arrow className="w-16" />
        <BigButton label="几何约束" icon={<GeoConstraint />} className="w-[66px]" />
        <BigButton label="设为对称" icon={<Symmetric />} className="w-16" />
        <BigButton label="显示草图约束" icon={<ShowConstraints />} iconActive arrow className="w-[91px]" />
      </Group>
      <GroupDivider />
      <div className="flex flex-1 items-end justify-end">
        <IconButton label="功能区选项" className="h-6 w-[22px]"><Caret /></IconButton>
      </div>
    </div>
  );
}

function SelectionBar() {
  return (
    <div className="flex h-9 shrink-0 items-center border-b border-[#8b8f91] bg-white">
      <button type="button" className="flex items-center gap-[3px] pl-2.5 text-[15px] leading-5">
        <MenuIcon />
        <span>菜单(<u>M</u>)</span>
        <Caret />
      </button>
      <BarDivider className="ml-1.5" />
      <Combo label="选择过滤器" value="无选择过滤器" className="ml-3 w-[167px]" />
      <Combo label="选择范围" value="仅在工作部件内" className="ml-[9px] w-44" />
      <IconButton label="装配选择" className="ml-[3px] w-6"><AsmGrey /></IconButton>
      <IconButton label="过滤器" className="w-7"><FilterGrey /></IconButton>
      <IconButton label="常规选择过滤器" className="w-5"><SelScope /></IconButton>
      <IconButton label="过滤器列表" className="w-3.5"><Caret /></IconButton>
      <IconButton label="重置捕捉"><SnapGrey /></IconButton>
      <IconButton label="矩形选择"><Marquee /></IconButton>
      <IconButton label="选择方式列表" className="mr-px w-3.5"><Caret /></IconButton>
      <IconButton label="高亮面"><FaceCube /></IconButton>
      <IconButton label="实体"><BlueCube /></IconButton>
      <IconButton label="启用捕捉点" className="mx-px h-[22px] w-[23px] border border-[#b4d8e0] bg-[#cde5eb]"><SnapAll /></IconButton>
      <IconButton label="端点"><EndPoint /></IconButton>
      <IconButton label="中点"><MidPoint /></IconButton>
      <IconButton label="控制点"><CtrlPoint /></IconButton>
      <IconButton label="极点"><Poles /></IconButton>
      <IconButton label="样条点"><Knots /></IconButton>
      <IconButton label="交点"><Intersect /></IconButton>
      <IconButton label="圆弧中心"><ArcCenter /></IconButton>
      <IconButton label="象限点" className="mx-px h-[22px] w-[23px] border border-[#b4d8e0] bg-[#cde5eb]"><Quadrant /></IconButton>
      <IconButton label="现有点"><Existing /></IconButton>
      <IconButton label="曲线上的点"><OnCurve /></IconButton>
      <IconButton label="面上的点"><OnFace /></IconButton>
      <BarDivider className="mx-1.5" />
      <IconButton label="适合窗口" className="w-[27px]"><FitWindow /></IconButton>
      <IconButton label="平移"><PanHand /></IconButton>
      <IconButton label="旋转"><Rotate /></IconButton>
      <IconButton label="布局"><Layout /></IconButton>
      <IconButton label="布局列表" className="w-3.5"><Caret /></IconButton>
      <IconButton label="定向视图"><DarkShape /></IconButton>
      <IconButton label="视图列表" className="w-3.5"><Caret /></IconButton>
      <IconButton label="渲染样式"><ShadedCube /></IconButton>
      <IconButton label="渲染列表" className="w-3.5"><Caret /></IconButton>
      <IconButton label="显示和隐藏"><ShowHide /></IconButton>
      <IconButton label="显示列表" className="w-3.5"><Caret /></IconButton>
      <BarDivider className="ml-2" />
      <div className="flex flex-1 items-end justify-end self-stretch">
        <IconButton label="选择条选项" className="h-[22px] w-[22px]"><Caret /></IconButton>
      </div>
    </div>
  );
}

function ResourceBar() {
  return (
    <aside className="flex w-8 shrink-0 flex-col border-r border-[#a0a0a0] bg-[#dcdcdc]">
      <IconButton label="资源条选项" className="mb-[15px] h-[27px] w-[30px]"><Gear /></IconButton>
      <IconButton label="装配导航器" className="h-[42px] w-[37px]"><Assembly /></IconButton>
      <IconButton label="约束导航器" className="h-10 w-[37px]"><Constraint /></IconButton>
      <IconButton label="部件导航器" className="ml-0.5 h-[46px] w-[30px] border-y border-l border-[#a0a0a0] bg-white pl-1"><PartNav /></IconButton>
      <IconButton label="重用库" className="mb-1.5 h-10 w-[35px]"><Books /></IconButton>
      <IconButton label="HD3D 工具" className="h-[54px] w-9"><InfoFeed /></IconButton>
      <IconButton label="Web 浏览器" className="h-[54px] w-9"><WebPage /></IconButton>
      <IconButton label="历史记录" className="h-[54px] w-9"><Clock /></IconButton>
      <IconButton label="角色" className="h-8 w-9"><Tools /></IconButton>
    </aside>
  );
}

function Expander({ open }) {
  return (
    <Svg w={11} h={11}>
      <path d="M.5.500h10v10H.5z" fill="#fff" stroke="#d8d8d8" />
      <path d={open ? "M2 5.500h7" : "M2 5.500h7M5.500 2v7"} stroke="#1e1e1e" strokeWidth="1.200" />
    </Svg>
  );
}

function TreeCheck({ label }) {
  return (
    <span className="relative flex h-3 w-3 shrink-0">
      <input type="checkbox" defaultChecked aria-label={label} className="h-3 w-3 appearance-none border border-black bg-white" />
      <Svg w={12} h={12} className="pointer-events-none absolute inset-0"><path d="M2 6l2-.8 1.300 1.600L9.500 1.500l1.200.3L5.500 10.500H4z" fill="#12b83a" stroke="#12b83a" strokeWidth=".4" /></Svg>
    </span>
  );
}

function Child({ label, icon, bold, last }) {
  return (
    <span className="ml-6 flex items-center">
      <svg width="12" height="24" viewBox="0 0 12 24" aria-hidden="true"><path d={last ? "M.5 0v12.500H11" : "M.5 0v24M.5 12.500H11"} fill="none" stroke="#8a8a8a" strokeDasharray="1 1" /></svg>
      <TreeCheck label={label} />
      <span className="mx-0.5">{icon}</span>
      <span className={bold ? "font-bold" : ""}>{label}</span>
    </span>
  );
}

const treeRows = [
  { key: "mode" },
  { key: "views", cell: <Expander /> },
  { key: "camera", cell: <><Expander /><span className="ml-[5px] flex items-center gap-[3px]"><Tick /><Camera /><span>摄像机</span></span></> },
  { key: "history", cell: <><Expander open /><span className="ml-[3px] flex items-center gap-[3px]"><Folder /><span>模型历史记录</span></span></> },
  { key: "csys", latest: true, cell: <Child label="基准坐标系 (0)" icon={<Datum />} /> },
  { key: "sketch", latest: true, cell: <Child label={'草图 (1) "SKET...'} icon={<SketchIcon />} bold last /> },
];

function Tree() {
  const rows = [...treeRows, ...Array.from({ length: 14 }, (_, i) => ({ key: `blank-${i}` }))];
  return (
    <div className="flex min-h-0 flex-1 flex-col border border-[#dcdcdc] px-px">
      <div className="min-h-0 flex-1 overflow-hidden">
        <table className="w-full table-fixed border-collapse text-[15px] leading-[23px]">
          <thead>
            <tr className="h-[25px] border-b border-[#c8c8c8] bg-[#f0f0f0] text-left">
              <th className="w-[199px] border-r border-[#d0d0d0] pl-[5px] font-normal">名称</th>
              <th className="w-[76px] border-r border-[#d0d0d0] pl-1.5 font-normal">最新</th>
              <th className="pl-1.5 font-normal">附注</th>
            </tr>
          </thead>
          <tbody>
            {rows.map((row) => (
              <tr key={row.key} className="h-6 border-b border-[#e8e8e8] odd:bg-white even:bg-[#fafafa]">
                <td className="overflow-hidden border-r border-[#e8e8e8] p-0 whitespace-nowrap">
                  <div className="flex h-[23px] items-center pl-1">{row.cell}</div>
                </td>
                <td className="border-r border-[#e8e8e8] p-0 pl-1.5">{row.latest && <Tick />}</td>
                <td className="p-0" />
              </tr>
            ))}
          </tbody>
        </table>
      </div>
      <div className="mb-0.5 flex h-5 shrink-0 items-center bg-[#f0f0f0]">
        <IconButton label="向左滚动" className="w-[21px]"><Svg w={8} h={10}><path d="M7 .5L2 5l5 4.500" stroke="#555" strokeWidth="2" /></Svg></IconButton>
        <div className="h-[19px] flex-1 bg-[#cdcdcd]" />
        <span className="w-[11px]" />
        <IconButton label="向右滚动" className="w-[21px]"><Svg w={8} h={10}><path d="M1 .5L6 5 1 9.500" stroke="#555" strokeWidth="2" /></Svg></IconButton>
      </div>
    </div>
  );
}

function SectionHeader({ title, open }) {
  return (
    <button type="button" aria-expanded={!!open} className="flex h-[26px] w-full items-center justify-between pr-1.5 pl-1.5 text-lg leading-6 text-[#00698c]">
      {title}
      <Svg w={15} h={12}><path d={open ? "M1.500 11L7.500 2.500l6 8.500" : "M1.500 1l6 8.500 6-8.500"} stroke="#00698c" strokeWidth="3" /></Svg>
    </button>
  );
}

function LineDialog() {
  return (
    <div role="dialog" aria-label="直线" className="absolute top-0 left-[52px] w-[118px] text-[#00698c]">
      <div className="flex h-[27px] items-center bg-[#539fb7] px-2.5 text-base leading-6 text-white">
        <Gear c="#fff" />
        <span className="ml-[11px] flex-1">直线</span>
        <button type="button" aria-label="关闭对话框"><Close c="#fff" /></button>
      </div>
      <div className="border border-t-0 border-[#dcdcdc] bg-[#f0f0f0] px-[7px] pt-1.5 pb-2">
        <div className="w-[90px] border-b border-[#d0d0d0] bg-white px-[5px] pb-1">
          <h2 className="pl-[3px] text-lg leading-6">输入模式</h2>
          <div className="flex gap-0.5">
            <button type="button" aria-pressed="true" className="h-8 w-8 bg-[#8cc1d1] text-lg leading-8 text-[#000080]">XY</button>
            <button type="button" aria-label="参数模式" className="flex h-8 w-8 items-center justify-center border border-[#a8a8a8] bg-white">
              <Svg w={22} h={20}><path d="M1 6v9M21 6v9M1 8.500h20" stroke="#000080" strokeWidth="1.200" /><path d="M1 8.500l4-2.500v5zM21 8.500l-4-2.500v5z" fill="#000080" /><path d="M9.500 2l3 4M12.500 2l-3 4" stroke="#000080" /><path d="M1 17h20v2H1z" fill="#222" /></Svg>
            </button>
          </div>
        </div>
      </div>
    </div>
  );
}

function NavigatorPanel() {
  return (
    <section aria-label="部件导航器" className="flex w-96 shrink-0 flex-col border-r border-[#8b9294] bg-white pr-[9px] pb-[6px] pl-[6px]">
      <div className="flex h-[31px] shrink-0 items-center justify-between pr-1.5 pl-[3px] text-[15px] leading-6">
        <h2>部件导航器</h2>
        <button type="button" aria-label="展开面板" className="mt-0.5 h-[13px] w-3.5 border border-t-2 border-black" />
      </div>
      <Tree />
      <div className="h-[5px] shrink-0 border border-[#a8a8a8] bg-[#dcdcdc]" />
      <div className="shrink-0 border-b-2 border-[#d0d0d0]"><SectionHeader title="相依性" /></div>
      <div className="shrink-0 border-b-2 border-[#d0d0d0]"><SectionHeader title="细节" /></div>
      <div className="flex shrink-0 flex-col items-center border border-[#dcdcdc] pb-2.5">
        <SectionHeader title="预览" open />
        <div className="mt-[5px] flex h-[185px] w-[247px] items-center justify-center border border-[#dcdcdc] text-[15px] leading-6">没有可用的预览</div>
      </div>
    </section>
  );
}

function CoordinateInput() {
  const xc = useRef(null);
  useEffect(() => {
    xc.current.focus({ preventScroll: true });
    xc.current.select();
  }, []);
  return (
    <form className="absolute top-[241px] left-[461px] flex h-[60px] w-[120px] items-center border border-[#a8a8a8] bg-[#f0f0f0] pr-[3px] pl-[2px] text-[15px] leading-5">
      <svg width="7" height="54" aria-hidden="true"><defs><pattern id="grip" width="4" height="4" patternUnits="userSpaceOnUse"><path d="M0 0h2v2H0z" fill="#b4b4b4" /></pattern></defs><rect width="7" height="54" fill="url(#grip)" /></svg>
      <div className="ml-2.5 grid flex-1 grid-cols-[22px_74px] grid-rows-[26px_26px] items-stretch">
        <label htmlFor="xc" className="self-center">XC</label>
        <input id="xc" ref={xc} defaultValue="0" className="w-full border border-[#a8a8a8] bg-white pl-1 caret-transparent outline-none selection:bg-[#0078d7] selection:text-white" />
        <label htmlFor="yc" className="self-center">YC</label>
        <input id="yc" defaultValue="157.5" className="w-full border border-[#a8a8a8] bg-white pl-1 text-black outline-none" />
      </div>
    </form>
  );
}

function Viewport() {
  return (
    <main className="relative min-w-0 flex-1 overflow-hidden bg-[#d3d4d6]">
      <svg className="absolute inset-0 h-full w-full" fill="none" aria-label="草图视图">
        <path d="M430 211L641 0" stroke="#7b9bc9" strokeWidth="1" />
        <path d="M430 211L-2 643" stroke="#6f7fc8" strokeWidth="1.100" strokeDasharray="2 2" />
        <path d="M219 0L1070 851" stroke="#0000f0" strokeWidth="1.600" />
        <path d="M430 211H4000" stroke="#0000f5" strokeWidth="2" />
        <path d="M430.500 211V2000" stroke="#0a0af5" strokeWidth="1.600" />
        <path d="M0 252.500L1504 257" stroke="#ffd92e" strokeWidth="2.400" />
        <path d="M430.500 200v31M424 211h26M422 219l16-16" stroke="#3b6cb8" strokeWidth="1.500" />
        <path d="M430.500 217v14M436 211h14" stroke="#0a28c8" strokeWidth="3" />
        <path d="M430.500 205l4 2 2 4-2 4-4 2-4-2-2-4 2-4z" fill="#ff8a2a" stroke="#e02050" strokeWidth="1" />
        <path d="M430.500 207l4 4-4 4-4-4z" fill="#ffee10" />
        <g>
          <path d="M68.500 755.500h26v26h-26z" fill="#cfcfcf" stroke="#b4b4b6" />
          <path d="M66.500 748v32" stroke="#7c9a7c" strokeWidth="2.500" />
          <path d="M66.500 738l3.500 10h-1.500v6h-4v-6H63z" fill="#2f9a2f" />
          <path d="M70 783h26" stroke="#7a1a1a" strokeWidth="1.500" />
          <path d="M87 782.500h6v-3l12 3-12 3.500v-2h-6z" fill="#e03030" />
          <path d="M63 779h7v7h-7z" fill="#0a32ff" />
          <text x="63" y="736" fontSize="13" fill="#3a9a3a">Y</text>
          <text x="114" y="787" fontSize="13" fill="#d84848">X</text>
        </g>
      </svg>
      <CoordinateInput />
    </main>
  );
}

function Watermark() {
  return (
    <div className="pointer-events-none absolute right-6 bottom-3.5 flex items-center gap-2">
      <svg width="72" height="82" viewBox="0 0 72 82" aria-hidden="true">
        <g stroke="#d8dadc" strokeWidth="1.200">
          <path d="M36 0L12 13c12 0 18 1 26 5l17 10C55 18 52 10 49 8z" fill="#c2dcea" />
          <path d="M0 20l12-7c10 0 18 1 24 5L16 30C8 34 3 42 0 50z" fill="#a8d3e8" />
          <path d="M50 8l22 12v16c-4 9-9 14-16 18V28c0-8-2-14-6-20z" fill="#7cc4e6" />
          <path d="M0 50c2-9 7-16 16-20v24c0 8 3 14 6 19L0 61z" fill="#8fc9e6" />
          <path d="M72 36v25l-12 7c-10 1-18-1-24-5l20-12c8-3 12-8 16-15z" fill="#66b4dd" />
          <path d="M17 53l20 11c8 4 15 5 23 4L36 82 22 73c-4-6-5-12-5-20z" fill="#72c9f0" />
          <path d="M36 18l20 11v23L36 64 16 52V29z" fill="#d3d4d6" stroke="none" />
          <path d="M36 22l16 10-16 9-16-9z" fill="#a4d1e6" />
          <path d="M20 32l16 9v18l-16-9z" fill="#8dc6e4" />
          <path d="M52 32l-16 9v18l16-9z" fill="#64b1da" />
        </g>
      </svg>
      <div className="font-['Liberation_Sans','Noto_Sans_CJK_SC',sans-serif] font-bold text-[#e7e8ea]">
        <p className="flex items-baseline text-[39px] leading-[42px]"><span className="text-[46px]">3D</span><span className="ml-0.5">世界网</span></p>
        <p className="font-['DejaVu_Sans',sans-serif] text-[17px] leading-5">WWW.3DSJW.COM</p>
      </div>
    </div>
  );
}

function StatusBar() {
  return (
    <footer className="shrink-0 border-t border-[#a0a0a0] bg-white text-sm leading-[22px] font-bold">
      <div className="flex h-[22px] items-center">
        <p className="w-[47%] pl-[3px]">选择直线的第一点</p>
        <p className="flex-1 pl-[3px]">象限 - Arc1 / SKETCH_000</p>
        <IconButton label="完成草图" className="w-[21px]"><Flag size={14} /></IconButton>
        <IconButton label="全屏显示" className="mr-[53px] w-5"><FullScreen /></IconButton>
      </div>
      <div className="flex h-0.5">
        <span className="w-[60px] bg-[#3c3f40]" />
        <span className="w-[430px] bg-[#c8c8c8]" />
        <span className="flex-1 bg-[#3c4244]" />
      </div>
    </footer>
  );
}

export default function App() {
  return (
    <div className="relative flex h-screen flex-col overflow-hidden bg-white font-['Open_Sans','Noto_Sans_CJK_SC',sans-serif] text-[#1e1e1e]">
      <TitleBar />
      <TabBar />
      <Ribbon />
      <SelectionBar />
      <div className="relative flex min-h-0 flex-1">
        <ResourceBar />
        <NavigatorPanel />
        <Viewport />
        <LineDialog />
      </div>
      <StatusBar />
      <Watermark />
    </div>
  );
}
